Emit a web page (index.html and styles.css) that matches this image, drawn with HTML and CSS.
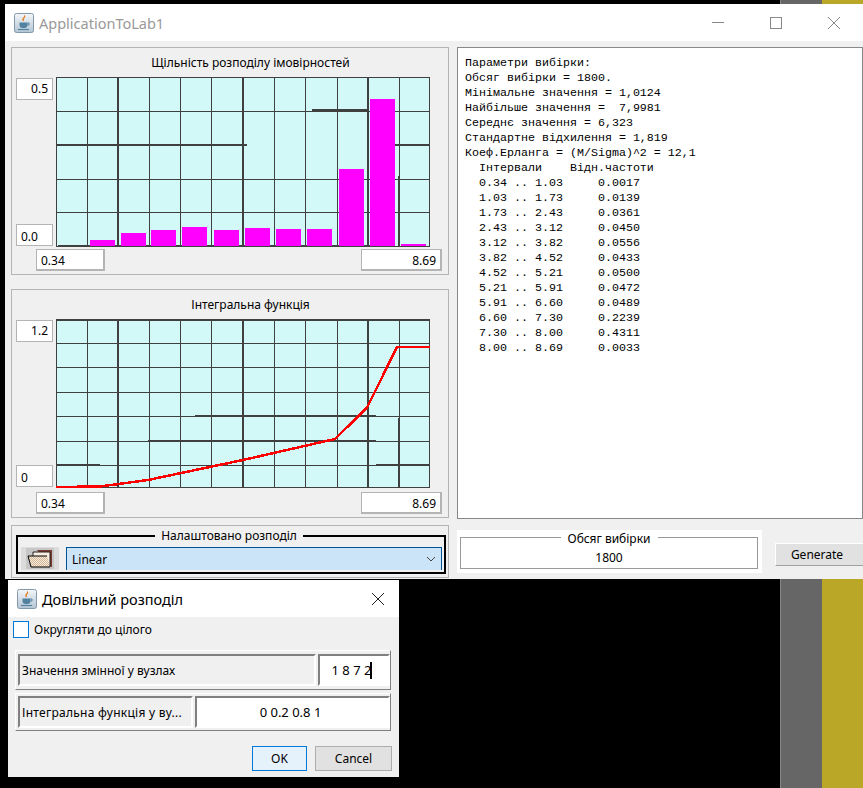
FILE: index.html
```html
<!DOCTYPE html>
<html lang="uk">
<head>
  <meta charset="UTF-8">
  <title>ApplicationToLab1</title>
  <meta name="viewport" content="width=device-width, initial-scale=1.0">
  <link rel="stylesheet" href="styles.css">
</head>
<body>

  <svg class="defs" width="0" height="0">
    <defs>
      <linearGradient id="iconBg" x1="0" y1="0" x2="0" y2="1">
        <stop offset="0" stop-color="#f3f6f9"/>
        <stop offset="1" stop-color="#b4c5d4"/>
      </linearGradient>
      <pattern id="dither" width="2" height="2" patternUnits="userSpaceOnUse">
        <rect width="2" height="2" fill="#f6ead8"/>
        <rect width="1" height="1" fill="#d2b59a"/>
        <rect x="1" y="1" width="1" height="1" fill="#d2b59a"/>
      </pattern>
      <symbol id="javaIcon" viewBox="0 0 20 20">
        <rect x="0.5" y="0.5" width="19" height="19" rx="2" fill="url(#iconBg)" stroke="#8298ab"/>
        <path d="M10.5 2.5c1.5 2-2.5 3-1 5.5c-2.5-2 1.500-3.500 1-5.500z" fill="#e76f00" stroke="#e76f00" stroke-width="0.7"/>
        <path d="M5.500 9.500h8v3a3 3 0 0 1-3 2.500h-2a3 3 0 0 1-3-2.500z" fill="#5382a1"/>
        <path d="M13.500 10h1.500v2h-1.500" fill="none" stroke="#5382a1"/>
        <path d="M4 16.500h11" stroke="#5382a1" stroke-width="1.200"/>
      </symbol>
    </defs>
  </svg>

  <div class="stripe stripe-grey"></div>
  <div class="stripe stripe-yellow"></div>

  <div class="window main-window">
    <div class="titlebar">
      <svg class="java-icon"><use href="#javaIcon"/></svg>
      <span class="title-text">ApplicationToLab1</span>
      <div class="controls">
        <div class="control">
          <svg width="12" height="12" viewBox="0 0 12 12"><path d="M0 5.500h12" stroke="#888"/></svg>
        </div>
        <div class="control">
          <svg width="12" height="12" viewBox="0 0 12 12"><rect x="0.500" y="0.500" width="11" height="11" fill="none" stroke="#888"/></svg>
        </div>
        <div class="control">
          <svg width="12" height="12" viewBox="0 0 12 12"><path d="M0 0l12 12M12 0L0 12" stroke="#888"/></svg>
        </div>
      </div>
    </div>

    <div class="main-body">
      <div class="left-col">

        <div class="panel chart-panel">
          <div class="panel-title">Щільність розподілу імовірностей</div>
          <div class="plot-row">
            <div class="y-axis">
              <div class="field field-right">0.5</div>
              <div class="field field-low">0.0</div>
            </div>
            <svg class="plot" width="374" height="170" viewBox="0 0 374 170">
              <rect width="374" height="170" fill="#d2f8f8"/>
              <path class="grid" d="M31 0v170M93 0v170M124 0v170M155 0v170M218 0v170M249 0v170M281 0v170M343 0v170M0 34h374M0 102h374M0 135h374"/>
              <path class="grid-thick" d="M62 0v170M187 0v170M312 0v170M0 68h191M339 68h35M256 33h56M343 99v71M2 169h318"/>
              <rect class="frame" x="0.500" y="0.500" width="373" height="169"/>
              <g class="bars">
                <rect x="34" y="163" width="25" height="6"/>
                <rect x="65" y="156" width="25" height="13"/>
                <rect x="95" y="153" width="25" height="16"/>
                <rect x="126" y="150" width="25" height="19"/>
                <rect x="158" y="153" width="25" height="16"/>
                <rect x="189" y="151" width="25" height="18"/>
                <rect x="220" y="152" width="25" height="17"/>
                <rect x="251" y="152" width="25" height="17"/>
                <rect x="283" y="92" width="25" height="77"/>
                <rect x="314" y="22" width="25" height="147"/>
                <rect x="345" y="167" width="25" height="2"/>
              </g>
            </svg>
          </div>
          <div class="range-row range-row-tight">
            <div class="field range-min">0.34</div>
            <div class="field range-max">8.69</div>
          </div>
        </div>

        <div class="panel chart-panel panel-second">
          <div class="panel-title">Інтегральна функція</div>
          <div class="plot-row">
            <div class="y-axis">
              <div class="field field-right">1.2</div>
              <div class="field field-low">0</div>
            </div>
            <svg class="plot" width="374" height="169" viewBox="0 0 374 169">
              <rect width="374" height="169" fill="#d2f8f8"/>
              <path class="grid" d="M31 0v169M93 0v169M124 0v169M155 0v169M218 0v169M249 0v169M281 0v169M343 0v169M0 24h374M0 48h374M0 73h374M0 97h374M0 122h374M0 146h374"/>
              <path class="grid-thick" d="M62 0v169M187 0v169M312 0v169M0 1h374M139 97h181M92 122h228M1 146h43M320 146h54M343 99v70"/>
              <rect class="frame" x="0.500" y="0.500" width="373" height="168"/>
              <polyline class="curve" points="0,168 44,167.500 92,161 187,141 279,120 311,88.700 341,28 374,28"/>
            </svg>
          </div>
          <div class="range-row">
            <div class="field range-min">0.34</div>
            <div class="field range-max">8.69</div>
          </div>
        </div>

        <div class="panel setup-panel">
          <div class="setup-box">
            <div class="setup-label">Налаштовано розподіл</div>
            <div class="setup-row">
              <div class="folder-btn">
                <svg width="26" height="19" viewBox="0 0 26 19">
                  <path d="M10 1h15v17h-1z" fill="#7a3a30"/>
                  <path d="M6 3h17v14H6z" fill="#f8efe2"/>
                  <path d="M1 7h19l3 11H4z" fill="url(#dither)"/>
                  <path d="M1 7h19M1 7l3 11h19" fill="none" stroke="#000"/>
                  <path d="M6 7V3h17M23 3v15" fill="none" stroke="#222"/>
                </svg>
              </div>
              <div class="combo">
                <span>Linear</span>
                <svg width="10" height="6" viewBox="0 0 10 6"><path d="M1 1l4 4l4-4" fill="none" stroke="#444"/></svg>
              </div>
            </div>
          </div>
        </div>
      </div>

      <div class="right-col">
<pre class="report">Параметри вибірки:
Обсяг вибірки = 1800.
Мінімальне значення = 1,0124
Найбільше значення =  7,9981
Середнє значення = 6,323
Стандартне відхилення = 1,819
Коеф.Ерланга = (M/Sigma)^2 = 12,1
  Інтервали    Відн.частоти
  0.34 .. 1.03     0.0017
  1.03 .. 1.73     0.0139
  1.73 .. 2.43     0.0361
  2.43 .. 3.12     0.0450
  3.12 .. 3.82     0.0556
  3.82 .. 4.52     0.0433
  4.52 .. 5.21     0.0500
  5.21 .. 5.91     0.0472
  5.91 .. 6.60     0.0489
  6.60 .. 7.30     0.2239
  7.30 .. 8.00     0.4311
  8.00 .. 8.69     0.0033</pre>
        <div class="sample-row">
          <div class="sample-box">
            <div class="sample-inner">
              <div class="sample-label">Обсяг вибірки</div>
              <div class="sample-value">1800</div>
            </div>
          </div>
          <button class="generate" type="button">Generate</button>
        </div>
      </div>
    </div>
  </div>

  <div class="window dialog">
    <div class="dialog-title">
      <svg class="java-icon"><use href="#javaIcon"/></svg>
      <span class="dialog-title-text">Довільний розподіл</span>
      <svg class="dialog-close" width="12" height="12" viewBox="0 0 12 12"><path d="M0 0l12 12M12 0L0 12" stroke="#222"/></svg>
    </div>
    <div class="dialog-body">
      <label class="check-row">
        <span class="checkbox"></span>
        <span>Округляти до цілого</span>
      </label>
      <div class="input-row">
        <div class="cell cell-label cell-wide">Значення змінної у вузлах</div>
        <div class="cell cell-input">1 8 7 2<span class="caret"></span></div>
      </div>
      <div class="input-row input-row-second">
        <div class="cell cell-label cell-short">Інтегральна функція у ву...</div>
        <div class="cell cell-input">0 0.2 0.8 1</div>
      </div>
      <div class="dialog-buttons">
        <button class="btn btn-ok" type="button">OK</button>
        <button class="btn btn-cancel" type="button">Cancel</button>
      </div>
    </div>
  </div>

</body>
</html>
```

FILE: styles.css
```css
html, body {
  margin: 0;
  height: 788px;
  overflow: hidden;
}

body {
  position: relative;
  background-color: #000;
  color: #000;
  font-family: "Noto Sans", sans-serif;
  font-size: 12px;
}

.defs {
  position: absolute;
}

/* desktop behind the windows */
.stripe {
  position: absolute;
  top: 0;
  bottom: 0;
}

.stripe-grey {
  left: 780px;
  width: 41px;
  background-color: #666;
  border-left: 1px solid #888;
}

.stripe-yellow {
  left: 822px;
  right: 0;
  background-color: #bba727;
}

.window {
  position: absolute;
  background-color: #f0f0f0;
}

.main-window {
  left: 5px;
  top: 4px;
  width: 858px;
  height: 575px;
}

.titlebar {
  display: flex;
  align-items: center;
  height: 37px;
  padding-left: 9px;
  background-color: #fff;
}

.java-icon {
  width: 20px;
  height: 20px;
  flex: none;
}

.title-text {
  margin-left: 5px;
  font-size: 14.5px;
  color: #999;
}

.controls {
  display: flex;
  margin-left: auto;
}

.control {
  display: flex;
  align-items: center;
  justify-content: center;
  width: 58px;
  height: 37px;
}

.main-body {
  display: flex;
  gap: 8px;
  padding: 6px 0 0 6px;
}

.left-col {
  width: 438px;
}

.right-col {
  width: 406px;
}

.panel {
  box-sizing: border-box;
  border: 1px solid #b4b4b4;
}

.panel-second {
  margin-top: 14px;
}

.panel-title {
  height: 29px;
  line-height: 29px;
  padding-left: 41px;
  text-align: center;
}

.plot-row {
  display: flex;
  gap: 3px;
  padding-left: 4px;
}

.plot {
  display: block;
  shape-rendering: crispEdges;
}

.grid {
  fill: none;
  stroke: #404040;
  stroke-width: 1;
}

.grid-thick {
  fill: none;
  stroke: #404040;
  stroke-width: 2;
}

.frame {
  fill: none;
  stroke: #404040;
}

.bars {
  fill: #ff00ff;
}

.curve {
  fill: none;
  stroke: #ff0000;
  stroke-width: 2.5;
}

.y-axis {
  display: flex;
  flex-direction: column;
  justify-content: space-between;
  width: 37px;
  padding: 1px 0;
  box-sizing: border-box;
}

.field {
  box-sizing: border-box;
  height: 22px;
  line-height: 20px;
  padding: 0 4px;
  background-color: #fff;
  border: 1px solid #b4b4b4;
}

.field-right {
  text-align: right;
}

.field-low {
  line-height: 23px;
}

.range-row {
  display: flex;
  justify-content: space-between;
  margin-top: 4px;
  padding: 0 6px 3px 24px;
}

.range-row-tight {
  margin-top: 2px;
}

.range-min,
.range-max {
  line-height: 21px;
  border-right-width: 2px;
  border-bottom-width: 2px;
}

.range-min {
  width: 69px;
}

.range-max {
  width: 81px;
  text-align: right;
}

.setup-panel {
  height: 53px;
  margin-top: 7px;
  padding: 9px 0 0 4px;
}

.setup-box {
  box-sizing: border-box;
  width: 430px;
  height: 39px;
  border: 2px solid #000;
}

.setup-label {
  width: fit-content;
  height: 16px;
  line-height: 16px;
  margin: -9px auto 0;
  padding: 0 6px;
  background-color: #f0f0f0;
  transform: translateX(-2px);
}

.setup-row {
  display: flex;
  gap: 7px;
  margin-top: 3px;
  padding: 0 2px 0 3px;
}

.folder-btn {
  display: flex;
  align-items: center;
  justify-content: center;
  box-sizing: border-box;
  width: 38px;
  height: 23px;
  background-color: #c6c6c6;
  border: solid #dcdcdc;
  border-width: 1px 5px;
}

.combo {
  display: flex;
  flex: 1;
  align-items: center;
  justify-content: space-between;
  box-sizing: border-box;
  height: 23px;
  padding: 0 5px;
  background-color: #cce4f7;
  border: 1px solid #005499;
  border-bottom: 0;
}

.report {
  box-sizing: border-box;
  height: 472px;
  margin: 0;
  padding: 8px 7px;
  background-color: #fff;
  border: 1px solid #87878c;
  font-family: "Liberation Mono", monospace;
  font-size: 11.67px;
  line-height: 15px;
}

.sample-row {
  display: flex;
  align-items: flex-start;
  gap: 13px;
  margin-top: 11px;
}

.sample-box {
  box-sizing: border-box;
  width: 305px;
  height: 43px;
  padding: 7px 4px 0 3px;
  background-color: #fff;
}

.sample-inner {
  height: 32px;
  box-sizing: border-box;
  border: 1px solid #999;
  text-align: center;
}

.sample-label {
  width: fit-content;
  height: 14px;
  line-height: 14px;
  margin: -6px auto 0;
  padding: 0 7px;
  background-color: #fff;
}

.sample-value {
  margin-top: 4px;
  line-height: 16px;
}

.generate {
  box-sizing: border-box;
  width: 88px;
  height: 23px;
  margin-top: 13px;
  padding: 0 5px 0 0;
  background-color: #e1e1e1;
  border: solid;
  border-width: 1px 0 1px 1px;
  border-color: #fff #a0a0a0 #a0a0a0 #fff;
  font: inherit;
}

.dialog {
  left: 8px;
  top: 580px;
  width: 391px;
  height: 197px;
}

.dialog-title {
  display: flex;
  align-items: center;
  height: 37px;
  padding-left: 9px;
  background-color: #fff;
}

.dialog-title-text {
  margin-left: 5px;
  font-size: 14.5px;
}

.dialog-close {
  margin-left: auto;
  margin-right: 15px;
}

.dialog-body {
  padding: 4px 7px 0 5px;
}

.check-row {
  display: flex;
  align-items: center;
  gap: 5px;
  height: 17px;
}

.checkbox {
  box-sizing: border-box;
  width: 16px;
  height: 17px;
  background-color: #fff;
  border: 1px solid #0078d7;
}

.input-row {
  display: flex;
  gap: 2px;
  box-sizing: border-box;
  height: 40px;
  margin: 12px 1px 0 2px;
  padding: 3px 0 3px 2px;
  background-color: #f0f0f0;
  border: 1px solid;
  border-color: #fff #808080 #808080 #fff;
}

.input-row-second {
  height: 38px;
  margin-top: 3px;
  padding-top: 2px;
  padding-bottom: 2px;
}

.cell {
  display: flex;
  align-items: center;
  box-sizing: border-box;
  border: 2px solid;
  border-color: #808080 #fff #fff #808080;
}

.cell-label {
  padding-left: 2px;
}

.cell-wide {
  width: 298px;
}

.cell-short {
  width: 175px;
  letter-spacing: 0.27px;
}

.cell-input {
  flex: 1;
  justify-content: center;
  padding-right: 4px;
  background-color: #fff;
  font-size: 13px;
}

.caret {
  display: inline-block;
  width: 2px;
  height: 17px;
  margin-left: -1px;
  background-color: #000;
}

.dialog-buttons {
  display: flex;
  justify-content: flex-end;
  gap: 8px;
  margin-top: 15px;
}

.btn {
  box-sizing: border-box;
  height: 25px;
  padding: 0;
  font: inherit;
}

.btn-ok {
  width: 55px;
  background-color: #e5f1fb;
  border: 1px solid #0078d7;
}

.btn-cancel {
  width: 77px;
  background-color: #e1e1e1;
  border: 1px solid #adadad;
}
```
